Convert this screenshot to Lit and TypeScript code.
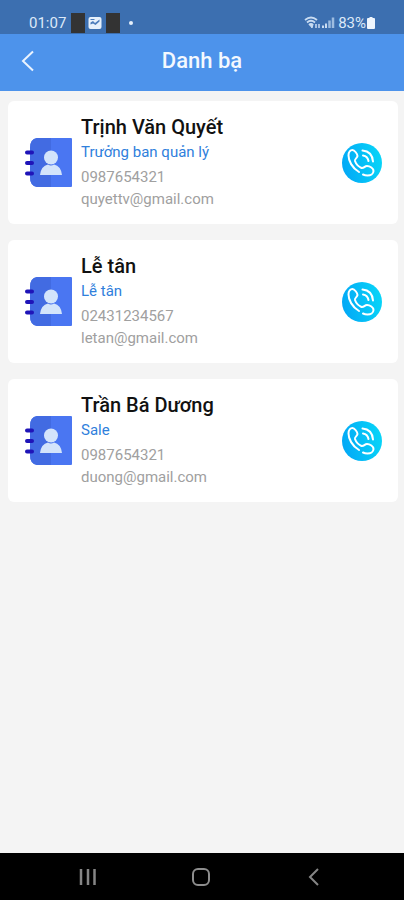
import { LitElement, html, svg, css } from "lit";
import { customElement, property } from "lit/decorators.js";

interface Contact {
  name: string;
  role: string;
  phone: string;
  email: string;
}

const contacts: Contact[] = [
  { name: "Trịnh Văn Quyết", role: "Trưởng ban quản lý", phone: "0987654321", email: "quyettv@gmail.com" },
  { name: "Lễ tân", role: "Lễ tân", phone: "02431234567", email: "letan@gmail.com" },
  { name: "Trần Bá Dương", role: "Sale", phone: "0987654321", email: "duong@gmail.com" },
];

@customElement("status-bar")
class StatusBar extends LitElement {
  static styles = css`
    :host {
      display: flex;
      align-items: flex-end;
      justify-content: space-between;
      height: 34px;
      box-sizing: border-box;
      padding: 0 28px 1px 29px;
      background: #3c6fb0;
      color: #dce9f8;
      font-size: 15px;
      line-height: 20px;
    }
    .group {
      display: flex;
      align-items: center;
      height: 20px;
    }
    .time {
      width: 42px;
    }
    .block {
      width: 14px;
      height: 20px;
      background: #333333;
    }
    .picture {
      margin: 0 4px 0 3px;
    }
    .dot {
      width: 4px;
      height: 4px;
      margin-left: 9px;
      border-radius: 50%;
      background: #e6f0fb;
    }
    .level {
      margin-left: 3px;
    }
    svg {
      display: block;
    }
  `;

  render() {
    return html`
      <div class="group">
        <span class="time">01:07</span>
        <span class="block"></span>
        <svg class="picture" width="14" height="14" viewBox="0 0 14 14" aria-hidden="true">
          <rect x="0.500" y="1" width="13" height="12" rx="2" fill="#e6f0fb" />
          <path d="M2.500 8.500V6.500L5 5L7 7L11.500 3.500V5.500L7.500 9L5 7.500Z" fill="#4c7cbb" />
          <path d="M2.500 3h4v1h-4z" fill="#4c7cbb" />
        </svg>
        <span class="block"></span>
        <span class="dot"></span>
      </div>
      <div class="group">
        <svg width="31" height="14" viewBox="0 0 31 14" fill="none" stroke="#c9dcf2" aria-hidden="true">
          <path d="M1 4Q7 -1 13 4M3 6.500Q7 3 11 6.500M5 9Q7 7 9 9" stroke-width="1.800" />
          <path d="M5.500 8.500h3.500L8 12z" fill="#c9dcf2" />
          <path d="M12 8v4M15 8v4" stroke-width="1.500" />
          <path d="M19 9.500V12M22 7.500V12" stroke-width="2" />
          <path d="M25.500 4.500V12M29 1.500V12" stroke="#9dbce0" stroke-width="2.500" />
        </svg>
        <span class="level">83%</span>
        <svg width="10" height="14" viewBox="0 0 10 14" fill="#eef5fd" aria-hidden="true">
          <path d="M3.500 1h3v1H8q1 0 1 1v9q0 1-1 1H2q-1 0-1-1V3q0-1 1-1h1.500z" />
        </svg>
      </div>
    `;
  }
}

@customElement("contact-card")
class ContactCard extends LitElement {
  @property({ attribute: false }) contact!: Contact;

  static styles = css`
    :host {
      display: block;
    }
    .card {
      display: flex;
      align-items: center;
      padding: 14px 16px;
      border-radius: 6px;
      background: #ffffff;
    }
    .info {
      flex: 1;
      min-width: 0;
      margin-left: 9px;
    }
    .name {
      margin: 0;
      font-size: 20px;
      line-height: 25px;
      font-weight: 500;
      color: #111111;
    }
    .role,
    .line {
      margin: 0;
      font-size: 15px;
    }
    .role {
      line-height: 24px;
      margin-bottom: 2px;
      color: #2f80dc;
    }
    .line {
      line-height: 22px;
      color: #a0a0a0;
    }
    .call {
      flex: none;
      width: 40px;
      height: 40px;
      padding: 0;
      border: 0;
      border-radius: 50%;
      background: linear-gradient(80deg, #02a5f6, #08d8f8);
      cursor: pointer;
    }
    svg {
      display: block;
      flex: none;
    }
  `;

  private book() {
    return svg`
      <path d="M13 0H47Q48 0 48 1V48Q48 49 47 49H13Q6 48 6 39V10Q6 1 13 0Z" fill="#4a76f2" />
      <path d="M13 0H27V49H13Q6 48 6 39V10Q6 1 13 0Z" fill="#426be2" />
      <path d="M3 14.500H8M3 25H8M3 35.500H8" stroke="#1f14b8" stroke-width="4" stroke-linecap="round" />
      <circle cx="27" cy="19.500" r="7" fill="#d3e4fb" />
      <path d="M16 37Q17 28 24 26.500Q27 28.500 30 26.500Q37 28 38 37Z" fill="#d3e4fb" />
    `;
  }

  render() {
    const c = this.contact;
    return html`
      <article class="card">
        <svg width="48" height="50" viewBox="0 0 48 50" aria-hidden="true">${this.book()}</svg>
        <div class="info">
          <h2 class="name">${c.name}</h2>
          <p class="role">${c.role}</p>
          <p class="line">${c.phone}</p>
          <p class="line">${c.email}</p>
        </div>
        <button class="call" type="button" aria-label="Gọi ${c.name}">
          <svg width="40" height="40" viewBox="0 0 40 40" fill="none" stroke="#ffffff" stroke-width="2" stroke-linecap="round" stroke-linejoin="round" aria-hidden="true">
            <path d="M17 29C10 25 6.500 17.500 6.500 12.500C6.500 9 8.500 7 10.500 7C12.500 7 15.500 11 15.500 13C15.500 15 12.500 15.500 13 18C14 21 16.500 23.500 19.500 25C22 25.500 22.500 23 25 23C28 23 31.500 25.500 31.500 28C31.500 31 28.500 32.500 25.500 32.500C23.500 32.500 22 32 21 31.500" />
            <path d="M20.500 7.500C26.500 8 30.500 12 31 18.500" />
            <path d="M21 12.500C24 13 26 15 26.500 18" />
          </svg>
        </button>
      </article>
    `;
  }
}

@customElement("app-root")
class AppRoot extends LitElement {
  static styles = css`
    :host {
      display: flex;
      flex-direction: column;
      min-height: 100vh;
      background: #f4f4f4;
      font-family: Roboto, "Noto Sans", sans-serif;
    }
    .header {
      display: grid;
      grid-template-columns: 56px 1fr 56px;
      align-items: center;
      height: 57px;
      box-sizing: border-box;
      padding-bottom: 4px;
      background: #4d93eb;
      color: #f4f8fe;
    }
    .back {
      display: grid;
      place-items: center;
      height: 53px;
      padding: 0;
      border: 0;
      background: none;
    }
    .title {
      margin: 0;
      text-align: center;
      font-size: 22px;
      line-height: 28px;
      font-weight: 500;
    }
    .list {
      flex: 1;
      display: flex;
      flex-direction: column;
      gap: 16px;
      padding: 10px 6px 16px 8px;
    }
    .nav {
      display: flex;
      align-items: center;
      justify-content: space-between;
      height: 47px;
      padding: 0 78px 0 76px;
      background: #000000;
    }
    .key {
      padding: 0;
      border: 0;
      background: none;
    }
    svg {
      display: block;
    }
  `;

  render() {
    return html`
      <status-bar></status-bar>
      <header class="header">
        <button class="back" type="button" aria-label="Quay lại">
          <svg width="14" height="22" viewBox="0 0 14 22" fill="none" stroke="#eaf3fe" stroke-width="2" aria-hidden="true">
            <path d="M12 1.500L2 11L12 20.500" />
          </svg>
        </button>
        <h1 class="title">Danh bạ</h1>
      </header>
      <main class="list">
        ${contacts.map((c) => html`<contact-card .contact=${c}></contact-card>`)}
      </main>
      <nav class="nav">
        <button class="key" type="button" aria-label="Gần đây">
          <svg width="24" height="20" viewBox="0 0 24 20" stroke="#858585" stroke-width="2.500" aria-hidden="true">
            <path d="M5 2V18M12 2V18M18.500 2V18" />
          </svg>
        </button>
        <button class="key" type="button" aria-label="Trang chủ">
          <svg width="20" height="20" viewBox="0 0 20 20" fill="none" stroke="#8d8d8d" stroke-width="2" aria-hidden="true">
            <rect x="2" y="2" width="16" height="16" rx="5" />
          </svg>
        </button>
        <button class="key" type="button" aria-label="Trở về">
          <svg width="24" height="20" viewBox="0 0 24 20" fill="none" stroke="#858585" stroke-width="2" aria-hidden="true">
            <path d="M16 2L8 10L16 18" />
          </svg>
        </button>
      </nav>
    `;
  }
}
